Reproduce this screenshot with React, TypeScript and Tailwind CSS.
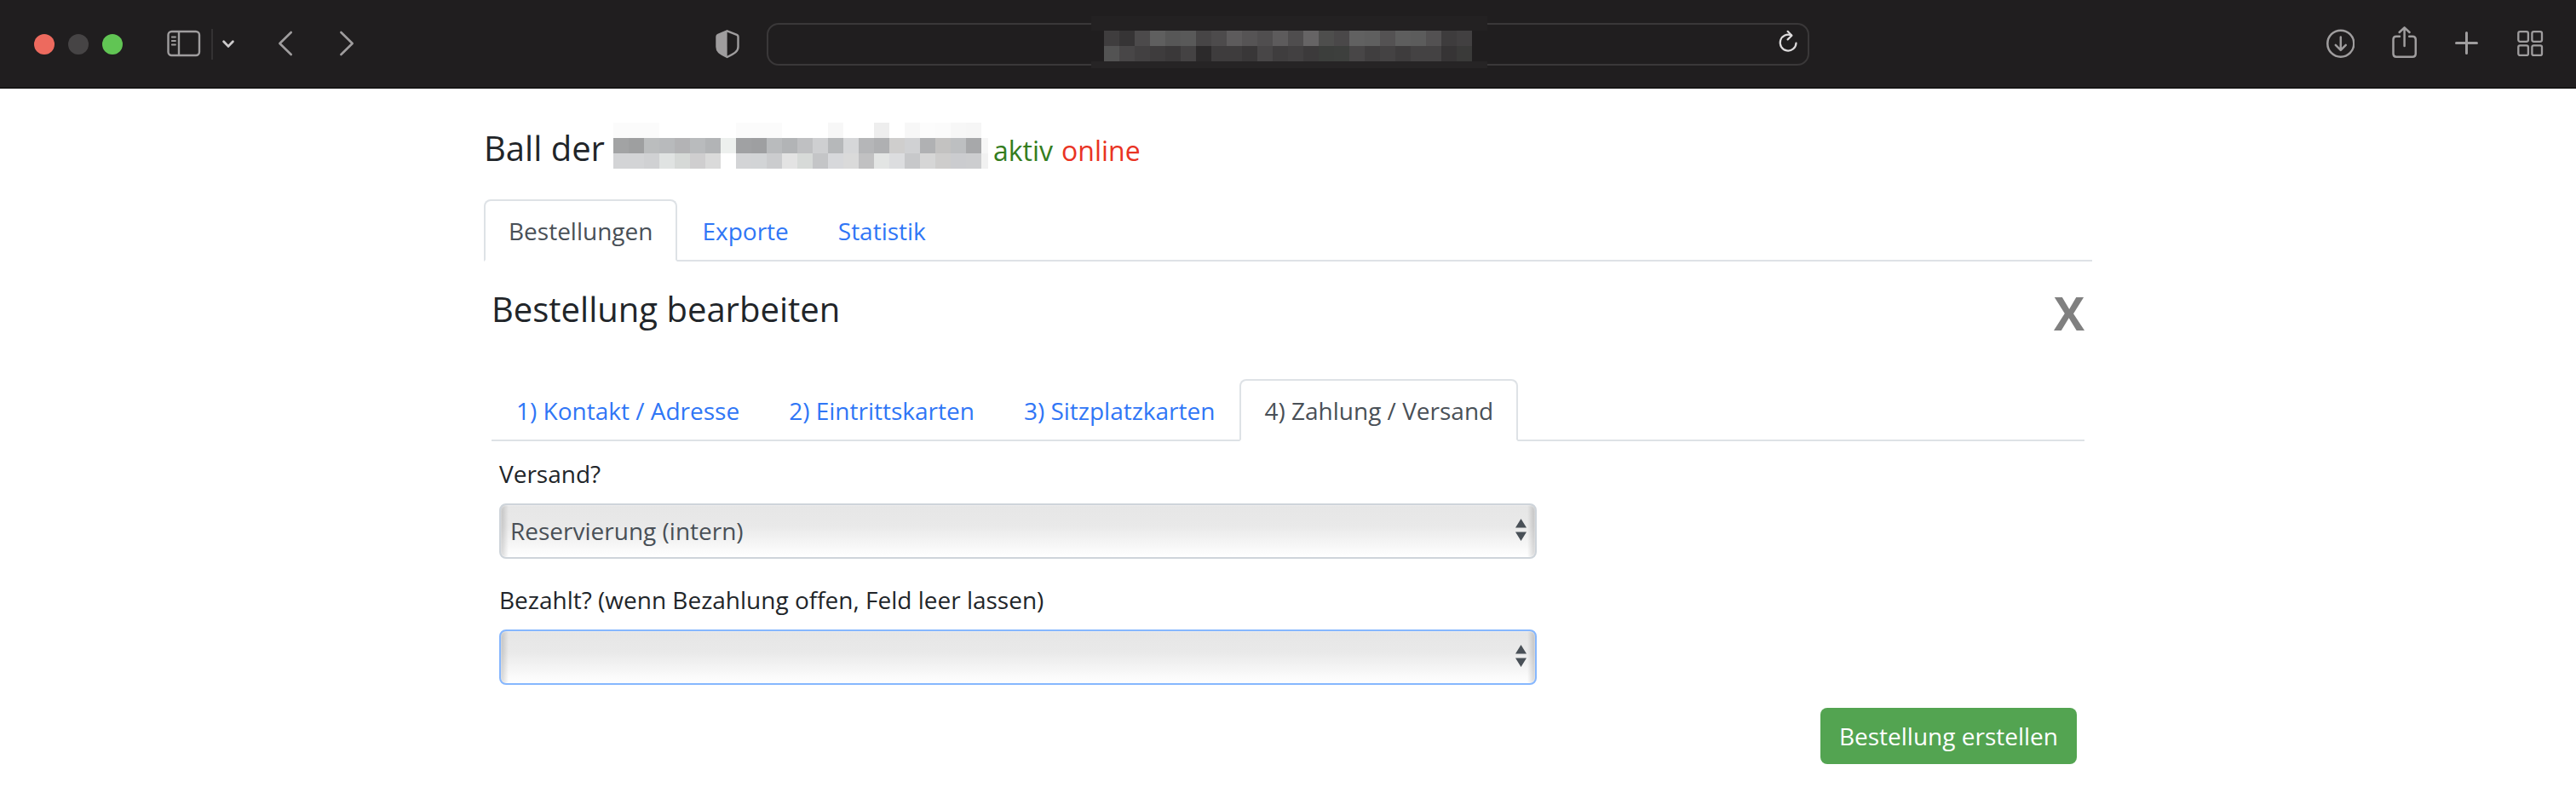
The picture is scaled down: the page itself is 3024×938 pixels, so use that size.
import { useState } from "react"

const TITLE_TILES = [
  ["#fbfbfb", "#fbfbfb", "#fbfbfb", "", "", "", "", "", "#fbfbfb", "#fbfbfb", "#fbfbfb", "", "", "", "#f7f7f7", "", "", "#eeeeee", "", "#f7f7f7", "#fcfcfc", "#fbfbfb", "#f7f7f7", "#f6f6f6"],
  ["#a2a3a4", "#9e9fa0", "#bbbdbe", "#b8babc", "#b3b3b5", "#b9bbbd", "#b2b4b6", "#edf0ee", "#a0a1a3", "#9e9fa1", "#b9bbbd", "#b2b4b6", "#bfc0c2", "#cecfd1", "#b6b8ba", "#d6d7d9", "#b5b6b8", "#afb0b2", "#cfcecd", "#d0d1d3", "#b0b1b3", "#c3c2c1", "#bdbfc1", "#a7a8aa"],
  ["#d3d4d6", "#d3d4d6", "#d0d1d3", "#e0e3e2", "#d6d9d7", "#cfcecf", "#dadada", "", "#d3d4d6", "#d2d4d6", "#cbccce", "#e3e3e3", "#d7dad8", "#c4c5c7", "#d7d8db", "#dadada", "#c1c1c2", "#e3e5e4", "#dcdddf", "#c7c8ca", "#d6d6d6", "#cecdcc", "#cbcccf", "#cccdcf"],
]

const URL_TILES = [
  ["#3f3d3e", "#363435", "#4c4a4b", "#5f5f5f", "#575757", "#595959", "#474546", "#4d4b4c", "#5d5b5c", "#565455", "#504e4f", "#5d5b5c", "#4f4d4e", "#666465", "#4e4e4d", "#4a4849", "#616161", "#5f5f5f", "#545253", "#5e5e5e", "#5c5c5c", "#535152", "#3e3c3d", "#424041"],
  ["#535353", "#484647", "#424041", "#3e3c3d", "#3a3839", "#444243", "#2c2a2b", "#3e3c3d", "#3e3c3d", "#393738", "#484647", "#3f3d3e", "#424041", "#3c3a3b", "#3c3e3c", "#3d3f3d", "#484647", "#403e3f", "#444243", "#3e3c3d", "#444243", "#444243", "#363435", "#3a3a39"],
]

interface TilesProps {
  rows: string[][]
  x?: number
  y?: number
}

function Tiles({ rows, x = 0, y = 0 }: TilesProps) {
  return (
    <g shapeRendering="crispEdges">
      {rows.map((row, r) =>
        row.map((fill, c) =>
          fill ? <rect key={`${r}-${c}`} x={x + c * 18} y={y + r * 18} width={18} height={18} fill={fill} /> : null
        )
      )}
    </g>
  )
}

function BrowserBar() {
  return (
    <header className="grid h-[104px] grid-cols-[1fr_minmax(0,1224px)_1fr] items-center border-b border-black bg-[#201e1f] text-[#9f9d9e]">
      <div className="flex items-center pl-10">
        <div className="flex gap-4">
          <span className="size-6 rounded-full bg-[#ed6a5e]" />
          <span className="size-6 rounded-full bg-[#464445]" />
          <span className="size-6 rounded-full bg-[#61c554]" />
        </div>
        <button type="button" aria-label="Seitenleiste" className="ml-13">
          <svg width="40" height="44" fill="none" stroke="currentColor" strokeWidth="2.4" strokeLinecap="round">
            <rect x="1.5" y="7" width="36.5" height="28" rx="4" />
            <path d="M14 7V35" strokeLinecap="butt" />
            <path d="M5.8 13.5H10M5.8 18H10M5.8 22.5H10" strokeWidth="1.8" />
          </svg>
        </button>
        <span className="ml-3 h-9 w-[2px] bg-[#343233]" />
        <button type="button" aria-label="Tabgruppen" className="ml-2 text-[#cdcbcc]">
          <svg width="20" height="44" fill="none" stroke="currentColor" strokeWidth="2.8" strokeLinecap="round" strokeLinejoin="round">
            <path d="M4.6 18.8L10 24.4L15.4 18.8" />
          </svg>
        </button>
        <button type="button" aria-label="Zurück" className="ml-[46px]">
          <svg width="24" height="44" fill="none" stroke="currentColor" strokeWidth="2.6" strokeLinecap="round" strokeLinejoin="round">
            <path d="M17.7 8L4.4 21L17.7 34" />
          </svg>
        </button>
        <button type="button" aria-label="Vorwärts" className="ml-12">
          <svg width="24" height="44" fill="none" stroke="currentColor" strokeWidth="2.6" strokeLinecap="round" strokeLinejoin="round">
            <path d="M4.4 8L17.7 21L4.4 34" />
          </svg>
        </button>
        <button type="button" aria-label="Datenschutz" className="mr-8 ml-auto">
          <svg width="28" height="44" fill="none" stroke="currentColor" strokeWidth="2.4" strokeLinejoin="round">
            <path d="M13.6 6.3L25 10.8Q26.5 11.5 26.5 13V25C26.5 30 23 32.5 13.6 37C4 32.5 1.5 30 1.5 25V13Q1.5 11.5 3 10.8Z" />
            <path d="M13.6 6.3V37C4 32.5 1.5 30 1.5 25V13Q1.5 11.5 3 10.8Z" fill="currentColor" stroke="none" />
          </svg>
        </button>
      </div>

      <div className="relative flex h-[50px] items-center rounded-[14px] border-2 border-[#3a3839]">
        <input type="text" aria-label="Adresse" className="h-full min-w-0 flex-1 bg-transparent px-4 outline-none" />
        <svg className="pointer-events-none absolute -top-[10px] left-1/2 -translate-x-1/2" width="468" height="61" shapeRendering="crispEdges">
          <rect x="3" width="465" height="61" fill="#201e1f" />
          <rect x="3" width="465" height="17" fill="#232122" />
          <rect x="3" y="53" width="465" height="8" fill="#262425" />
          <Tiles rows={URL_TILES} x={18} y={17} />
        </svg>
        <button type="button" aria-label="Neu laden" className="mr-[10px] text-[#dddbdc]">
          <svg width="28" height="44" fill="none" stroke="currentColor" strokeWidth="2.2" strokeLinecap="round" strokeLinejoin="round">
            <path d="M24.5 20.5A9.4 9.4 0 1 1 19 11.6" />
            <path d="M14.6 6.8L19.4 11.8L14.6 16.4" />
          </svg>
        </button>
      </div>

      <div className="flex items-center justify-end gap-11 pr-10">
        <button type="button" aria-label="Downloads">
          <svg width="34" height="44" fill="none" stroke="currentColor" strokeWidth="2.5" strokeLinecap="round" strokeLinejoin="round">
            <circle cx="17.8" cy="21.2" r="15.5" />
            <path d="M17.8 13.5V28.5M11.8 22.8L17.8 28.8L23.8 22.8" />
          </svg>
        </button>
        <button type="button" aria-label="Teilen">
          <svg width="30" height="44" fill="none" stroke="currentColor" strokeWidth="2.5" strokeLinecap="round" strokeLinejoin="round">
            <path d="M9 12.8H5Q1.5 12.8 1.5 16.3V33Q1.5 36.7 5 36.7H24Q27.8 36.7 27.8 33V16.3Q27.8 12.8 24 12.8H20.2" />
            <path d="M14.6 24V2.8M8.6 8L14.6 2.3L20.6 8" />
          </svg>
        </button>
        <button type="button" aria-label="Neuer Tab">
          <svg width="28" height="44" fill="none" stroke="currentColor" strokeWidth="3" strokeLinecap="round">
            <path d="M13.5 8.5V32.5M1.5 20.5H25.5" />
          </svg>
        </button>
        <button type="button" aria-label="Tabübersicht">
          <svg width="32" height="44" fill="none" stroke="currentColor" strokeWidth="2.3" className="-mr-[2px]">
            <rect x="2.3" y="7.2" width="11.6" height="11.6" rx="2" />
            <rect x="18.4" y="7.2" width="11.6" height="11.6" rx="2" />
            <rect x="2.3" y="23.3" width="11.6" height="11.6" rx="2" />
            <rect x="18.4" y="23.3" width="11.6" height="11.6" rx="2" />
          </svg>
        </button>
      </div>
    </header>
  )
}

interface TabsProps {
  items: string[]
  active: string
  onSelect: (item: string) => void
}

function Tabs({ items, active, onSelect }: TabsProps) {
  return (
    <nav className="flex border-b-2 border-[#dee2e6]">
      {items.map((item) => (
        <a
          key={item}
          href="#"
          onClick={(e) => {
            e.preventDefault()
            onSelect(item)
          }}
          className={
            item === active
              ? "-mb-[2px] rounded-t-lg border-2 border-[#dee2e6] border-b-white bg-white px-[27px] pt-[15px] pb-[13px] leading-[41px] text-[#495057]"
              : "-mb-[2px] border-2 border-transparent px-[27px] pt-[15px] pb-[13px] leading-[41px] text-[#2f76f6]"
          }
        >
          {item}
        </a>
      ))}
    </nav>
  )
}

interface SelectFieldProps {
  id: string
  label: string
  options: string[]
  focused?: boolean
}

function SelectField({ id, label, options, focused }: SelectFieldProps) {
  return (
    <div className="max-w-[1218px]">
      <label htmlFor={id} className="block leading-[42px]">{label}</label>
      <div className="relative mt-[14px]">
        <select
          id={id}
          className={
            "block h-[65px] w-full appearance-none rounded-lg border-2 bg-[linear-gradient(90deg,rgba(0,0,0,0.16),transparent_9px,transparent_calc(100%-9px),rgba(0,0,0,0.16)),linear-gradient(180deg,#e6e6e6,#e9e9e9_40%,#f1f1f1_62%,#ffffff)] px-[11px] pb-[2px] text-[#495057] shadow-[inset_0_0_2px_#ffffff] outline-none " +
            (focused ? "border-[#86b7fe]" : "border-[#ced4da]")
          }
        >
          {options.map((option) => (
            <option key={option}>{option}</option>
          ))}
        </select>
        <svg className="pointer-events-none absolute top-[18px] right-3 text-[#495057]" width="13" height="26" fill="currentColor">
          <path d="M6.5 0L13 10.5H0ZM6.5 26L0 15.5H13Z" />
        </svg>
      </div>
    </div>
  )
}

export default function App() {
  const [section, setSection] = useState("Bestellungen")
  const [step, setStep] = useState("4) Zahlung / Versand")

  return (
    <div className="min-h-screen bg-white font-['Open_Sans',sans-serif] text-[28px] text-[#212529]">
      <BrowserBar />

      <main className="mx-auto w-full max-w-[1888px] pt-10 pb-10">
        <div className="flex items-end">
          <h1 className="text-[40px] leading-12">Ball der</h1>
          <svg className="ml-[10px]" width="440" height="54" role="img" aria-label="Name">
            <Tiles rows={TITLE_TILES} />
            <rect x="432" y="18" width="8" height="18" fill="#f6f6f6" />
            <rect x="432" y="36" width="8" height="18" fill="#f1f1f1" />
          </svg>
          <p className="ml-[6px] flex gap-[10px] text-[32px] leading-[42px]">
            <span className="text-[#347d1e]">aktiv</span>
            <span className="text-[#e93323]">online</span>
          </p>
        </div>

        <div className="mt-9">
          <Tabs items={["Bestellungen", "Exporte", "Statistik"]} active={section} onSelect={setSection} />
        </div>

        <section className="px-[9px]">
          <div className="mt-8 mb-[50px] flex items-start justify-between">
            <h2 className="text-[40px] leading-12">Bestellung bearbeiten</h2>
            <button type="button" aria-label="Schließen" className="text-[54px] leading-14 font-bold text-[#808080]">
              X
            </button>
          </div>

          <Tabs
            items={["1) Kontakt / Adresse", "2) Eintrittskarten", "3) Sitzplatzkarten", "4) Zahlung / Versand"]}
            active={step}
            onSelect={setStep}
          />

          <form className="px-[9px] pt-[17px]" onSubmit={(e) => e.preventDefault()}>
            <div className="flex flex-col gap-[27px]">
              <SelectField id="versand" label="Versand?" options={["Reservierung (intern)"]} />
              <SelectField id="bezahlt" label="Bezahlt? (wenn Bezahlung offen, Feld leer lassen)" options={[""]} focused />
            </div>
            <div className="mt-[27px] flex justify-end">
              <button type="submit" className="h-[66px] rounded-lg bg-[#53a451] px-[22px] text-white">
                Bestellung erstellen
              </button>
            </div>
          </form>
        </section>
      </main>
    </div>
  )
}
